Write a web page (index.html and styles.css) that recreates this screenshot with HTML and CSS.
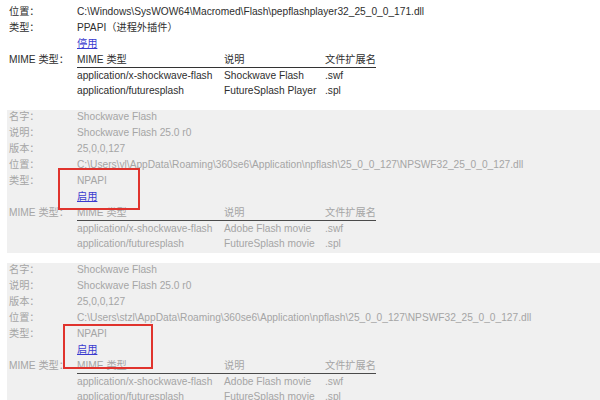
FILE: index.html
```html
<!DOCTYPE html>
<html lang="en">

<head>
    <meta charset="UTF-8">
    <title>Plugins</title>
    <link rel="stylesheet" href="styles.css">
</head>

<body>

    <div class="plugin first">
        <div class="rows">
            <span class="label">位置：</span>
            <span>C:\Windows\SysWOW64\Macromed\Flash\pepflashplayer32_25_0_0_171.dll</span>
            <span class="label">类型：</span>
            <span>PPAPI（进程外插件）</span>
            <span></span>
            <span><a href="#">停用</a></span>
            <span class="label">MIME 类型：</span>
            <table class="mime">
                <tr><th class="c1">MIME 类型</th><th class="c2">说明</th><th class="c3">文件扩展名</th></tr>
                <tr><td>application/x-shockwave-flash</td><td>Shockwave Flash</td><td>.swf</td></tr>
                <tr><td>application/futuresplash</td><td>FutureSplash Player</td><td>.spl</td></tr>
            </table>
        </div>
    </div>

    <div class="plugin disabled">
        <div class="rows">
            <span class="label">名字：</span>
            <span>Shockwave Flash</span>
            <span class="label">说明：</span>
            <span>Shockwave Flash 25.0 r0</span>
            <span class="label">版本：</span>
            <span>25,0,0,127</span>
            <span class="label">位置：</span>
            <span>C:\Users\yl\AppData\Roaming\360se6\Application\npflash\25_0_0_127\NPSWF32_25_0_0_127.dll</span>
            <span class="label">类型：</span>
            <span>NPAPI</span>
            <span></span>
            <span><a href="#">启用</a></span>
            <span class="label">MIME 类型：</span>
            <table class="mime">
                <tr><th class="c1">MIME 类型</th><th class="c2">说明</th><th class="c3">文件扩展名</th></tr>
                <tr><td>application/x-shockwave-flash</td><td>Adobe Flash movie</td><td>.swf</td></tr>
                <tr><td>application/futuresplash</td><td>FutureSplash movie</td><td>.spl</td></tr>
            </table>
        </div>
        <div class="mark mark-one"></div>
    </div>

    <div class="plugin disabled">
        <div class="rows">
            <span class="label">名字：</span>
            <span>Shockwave Flash</span>
            <span class="label">说明：</span>
            <span>Shockwave Flash 25.0 r0</span>
            <span class="label">版本：</span>
            <span>25,0,0,127</span>
            <span class="label">位置：</span>
            <span>C:\Users\stzl\AppData\Roaming\360se6\Application\npflash\25_0_0_127\NPSWF32_25_0_0_127.dll</span>
            <span class="label">类型：</span>
            <span>NPAPI</span>
            <span></span>
            <span><a href="#">启用</a></span>
            <span class="label">MIME 类型：</span>
            <table class="mime">
                <tr><th class="c1">MIME 类型</th><th class="c2">说明</th><th class="c3">文件扩展名</th></tr>
                <tr><td>application/x-shockwave-flash</td><td>Adobe Flash movie</td><td>.swf</td></tr>
                <tr><td>application/futuresplash</td><td>FutureSplash movie</td><td>.spl</td></tr>
            </table>
        </div>
        <div class="mark mark-two"></div>
    </div>

</body>

</html>
```

FILE: styles.css
```css
body {
    margin: 0;
    padding: 5px 0 0 7px;
    background-color: white;
    font-family: "Liberation Sans", Arial, "Noto Sans CJK SC", sans-serif;
    font-size: 10.2px;
    color: #2e2e2e;
    overflow: hidden;
}

.plugin {
    position: relative;
    padding: 0 0 2px 2px;
    margin-bottom: 10px;
    white-space: nowrap;
}

.rows {
    display: grid;
    grid-template-columns: 68px 1fr;
    row-gap: 2px;
    line-height: 14px;
}

.disabled {
    background-color: #f0f0f0;
    color: #a5a5a5;
}

a {
    color: #3a3acf;
    text-decoration: underline;
}

.mime {
    justify-self: start;
    border-collapse: collapse;
    table-layout: fixed;
    width: 299px;
    font-size: 10.2px;
    line-height: 14px;
}

.mime th {
    font-weight: normal;
    text-align: left;
    padding: 0;
    border-bottom: 1px solid #333;
}

.mime td {
    padding: 1px 0 0;
}

.c1 {
    width: 147px;
}

.c2 {
    width: 101px;
}

.c3 {
    width: 51px;
}

.disabled .mime th {
    border-bottom-color: #4a4a4a;
}

.mark {
    position: absolute;
    border: 2px solid #e0332d;
}

.mark-one {
    left: 51px;
    top: 58px;
    width: 78px;
    height: 38px;
}

.mark-two {
    left: 56px;
    top: 61px;
    width: 86px;
    height: 41px;
}
```
